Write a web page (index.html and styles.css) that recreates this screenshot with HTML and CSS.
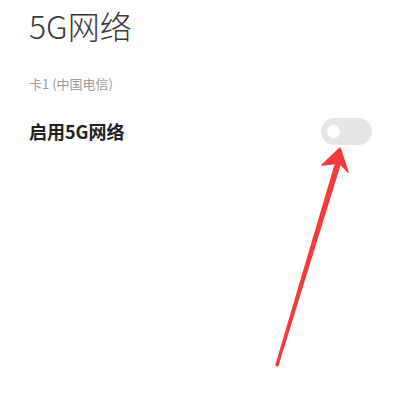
FILE: index.html
```
<!DOCTYPE html>
<html lang="zh">
<head>
<meta charset="utf-8">
<link rel="stylesheet" href="styles.css">
</head>
<body>
<div class="page">
  <h1 class="title">5G网络</h1>
  <div class="section">卡1 (中国电信)</div>
  <div class="row">
    <span class="label">启用5G网络</span>
    <span class="switch"><span class="knob"></span></span>
  </div>
</div>
<svg class="arrow" width="400" height="400" viewBox="0 0 400 400">
  <polygon points="336.1,159.2 341.9,160.8 278.6,365.6 275.4,364.4" fill="#f23b3a"/>
  <circle cx="277" cy="365" r="1.6" fill="#f23b3a"/>
  <polygon points="340,148 348,172 339.5,163 322,165" fill="#f23b3a" stroke="#f23b3a" stroke-width="1.5" stroke-linejoin="round"/>
</svg>
</body>
</html>
```
FILE: styles.css
```
html, body {
  margin: 0;
  padding: 0;
  background: #ffffff;
}
body {
  width: 400px;
  height: 400px;
  overflow: hidden;
  position: relative;
  font-family: "Noto Sans CJK SC", "Noto Sans", sans-serif;
}
.page {
  padding: 4px 28px 0 29px;
}
.title {
  margin: 0;
  font-size: 32px;
  font-weight: 300;
  line-height: 42px;
  color: #3a3a3a;
}
.section {
  margin-top: 30px;
  font-size: 13px;
  line-height: 16px;
  color: #9a9a9a;
}
.row {
  margin-top: 26px;
  display: flex;
  align-items: center;
  justify-content: space-between;
}
.label {
  font-size: 18px;
  font-weight: 700;
  color: #222222;
  line-height: 27px;
}
.switch {
  width: 51px;
  height: 27px;
  border-radius: 14px;
  background: #e5e5e5;
  display: flex;
  align-items: center;
  padding-left: 6px;
  box-sizing: border-box;
}
.knob {
  width: 13px;
  height: 13px;
  border-radius: 50%;
  background: #ffffff;
}
.arrow {
  position: absolute;
  left: 0;
  top: 0;
}
```
